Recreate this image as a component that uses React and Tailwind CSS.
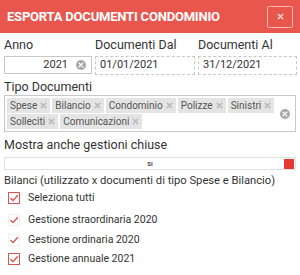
import React from "react";

const ClearIcon = ({ className = "" }) => (
  <svg width="10" height="10" viewBox="0 0 10 10" className={className}>
    <circle cx="5" cy="5" r="5" fill="#a8a8a8" />
    <path d="M3.2 3.2 L6.8 6.8 M6.8 3.2 L3.2 6.8" stroke="#fff" strokeWidth="1.3" strokeLinecap="round" />
  </svg>
);

const Tag = ({ label }) => (
  <span className="flex items-center h-[15px] bg-[#e4e4e4] pl-[3px] pr-[3px] text-[10px] text-[#555] leading-none gap-[3px]">
    {label}
    <svg width="7" height="7" viewBox="0 0 8 8">
      <path d="M1 1 L7 7 M7 1 L1 7" stroke="#bdbdbd" strokeWidth="2" />
    </svg>
  </span>
);

const Check = ({ bordered }) => (
  <span
    className={
      "w-[12px] h-[12px] flex items-center justify-center border " +
      (bordered ? "border-[#d9534f]" : "border-[#f0f0f0]")
    }
  >
    <svg width="10" height="10" viewBox="0 0 10 10">
      <path d="M1.5 5.2 L4 7.6 L8.8 2.2" stroke="#d9534f" strokeWidth="1.4" fill="none" />
    </svg>
  </span>
);

export default function App() {
  return (
    <div className="w-[300px] h-[275px] bg-white overflow-hidden text-[#333] font-['Roboto',sans-serif]">
      <div className="h-[33px] bg-[#e9564d] flex items-center justify-between pl-[7px] pr-[7px]">
        <span className="text-white font-bold text-[13px] tracking-[-0.2px]">ESPORTA DOCUMENTI CONDOMINIO</span>
        <button className="w-[26px] h-[22px] border border-[#f6b9b4] rounded-[2px] flex items-center justify-center">
          <svg width="7" height="7" viewBox="0 0 8 8">
            <path d="M1 1 L7 7 M7 1 L1 7" stroke="#fbe3e1" strokeWidth="1.6" />
          </svg>
        </button>
      </div>
      <div className="px-[4px]">
        <div className="grid grid-cols-[88px_100px_99px] gap-x-[3px] mt-[4px]">
          <div className="text-[12.5px] leading-[15px]">Anno</div>
          <div className="text-[12.5px] leading-[15px]">Documenti Dal</div>
          <div className="text-[12.5px] leading-[15px]">Documenti Al</div>
          <div className="mt-[4px] h-[18px] border border-[#c8c8c8] flex items-center justify-end pr-[5px] gap-[8px] text-[11px]">
            <span>2021</span>
            <ClearIcon />
          </div>
          <div className="mt-[4px] h-[19px] border border-dashed border-[#c8c8c8] flex items-center pl-[4px] text-[11px]">
            01/01/2021
          </div>
          <div className="mt-[4px] h-[19px] border border-dashed border-[#c8c8c8] flex items-center pl-[4px] text-[11px]">
            31/12/2021
          </div>
        </div>
        <div className="text-[12.5px] leading-[15px] mt-[4px]">Tipo Documenti</div>
        <div className="mt-[1px] h-[37px] border border-[#c8c8c8] flex items-center pl-[2px] pr-[5px]">
          <div className="flex-1 flex flex-wrap gap-x-[2px] gap-y-[1px]">
            <Tag label="Spese" />
            <Tag label="Bilancio" />
            <Tag label="Condominio" />
            <Tag label="Polizze" />
            <Tag label="Sinistri" />
            <Tag label="Solleciti" />
            <Tag label="Comunicazioni" />
          </div>
          <ClearIcon />
        </div>
        <div className="text-[12.5px] leading-[15px] mt-[5px]">Mostra anche gestioni chiuse</div>
        <div className="mt-[5px] h-[13px] border border-[#e2e2e2] relative flex items-center justify-center">
          <span className="text-[6px] font-bold text-[#444] leading-none">SI</span>
          <span className="absolute right-[1px] top-[1px] w-[10px] h-[10px] bg-[#e53935]" />
        </div>
        <div className="text-[11.2px] leading-[15px] mt-[3px] whitespace-nowrap">Bilanci (utilizzato x documenti di tipo Spese e Bilancio)</div>
        <div className="flex flex-col pl-[4px] mt-0">
          <div className="h-[20px] flex items-center gap-[8px] text-[10.5px]">
            <Check bordered />
            <span>Seleziona tutti</span>
          </div>
          <div className="h-[21px] flex items-center gap-[8px] text-[10.5px] mt-[1px]">
            <Check />
            <span>Gestione straordinaria 2020</span>
          </div>
          <div className="h-[19px] flex items-center gap-[8px] text-[10.5px]">
            <Check />
            <span>Gestione ordinaria 2020</span>
          </div>
          <div className="h-[19px] flex items-center gap-[8px] text-[10.5px]">
            <Check bordered />
            <span>Gestione annuale 2021</span>
          </div>
        </div>
      </div>
    </div>
  );
}
